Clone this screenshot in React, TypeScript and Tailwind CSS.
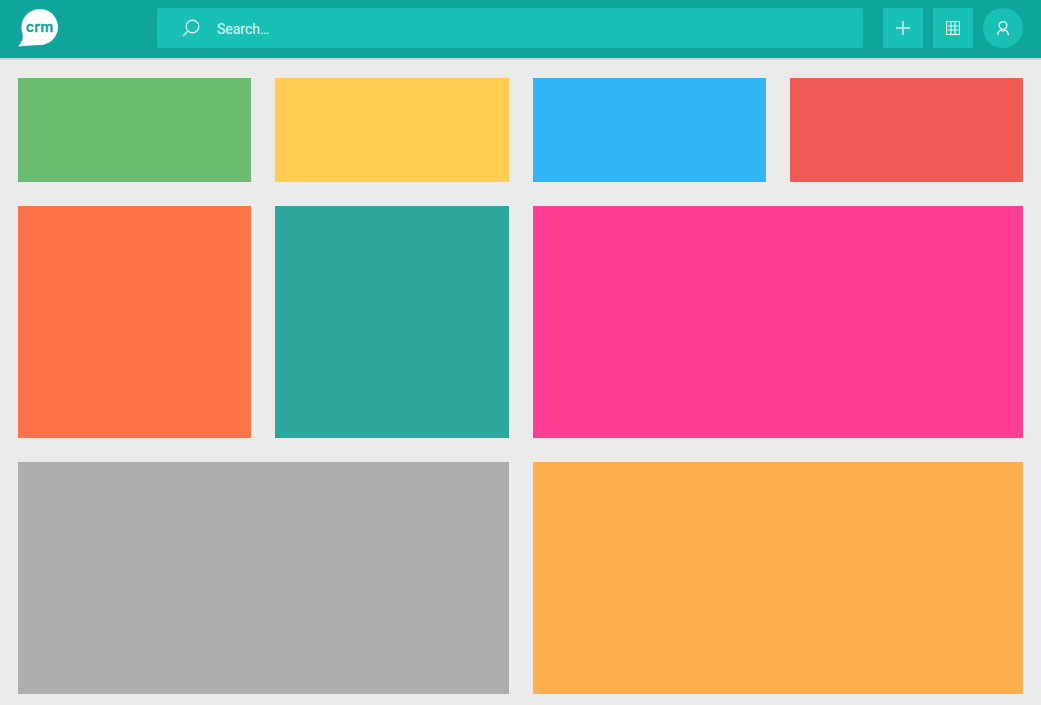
export default function App() {
  return (
    <div className="h-[705px] overflow-hidden bg-[#ebebeb] font-['Roboto',sans-serif]">
      <header className="h-[60px] flex items-start pt-2 bg-[#10a59a] border-b-2 border-[#d2d4d3]">
        <div className="w-[157px] pl-[18px] shrink-0 flex">
          <svg width="41" height="39" viewBox="0 0 41 39">
            <path d="M22 1 C32 1 40 9 40 19 C40 29 32 37 22 37 C16 37 9 38 0 38.500 C3 35 5 32 4.800 27 C4 24.500 3.500 22 3.500 19 C3.500 9 12 1 22 1 Z" fill="#ffffff" />
            <text x="21.500" y="23.500" textAnchor="middle" fontFamily="Inter, sans-serif" fontSize="14.500" fontWeight="600" fill="#10a59a" stroke="#10a59a" strokeWidth="0.300">crm</text>
          </svg>
        </div>
        <div className="flex-1 h-10 bg-[#19c1b4] rounded-[2px] flex items-center pl-[25px]">
          <svg width="18" height="18" viewBox="0 0 18 18" fill="none" stroke="#e4f7f5" strokeWidth="1.200">
            <circle cx="10.500" cy="7.500" r="6.300" />
            <path d="M6 12 L1 17" />
          </svg>
          <span className="ml-[17px] text-[14px] leading-none text-[#e4f7f5] pt-[2px]">Search…</span>
        </div>
        <div className="flex items-center gap-[10px] ml-5 mr-[18px]">
          <button className="w-10 h-10 bg-[#19c1b4] flex items-center justify-center">
            <svg width="14" height="14" viewBox="0 0 14 14" stroke="#c4efeb" strokeWidth="1.500">
              <path d="M7 0 V14 M0 7 H14" />
            </svg>
          </button>
          <button className="w-10 h-10 bg-[#19c1b4] flex items-center justify-center">
            <svg width="14" height="14" viewBox="0 0 14 14" fill="none" stroke="#ffffff" strokeWidth="1">
              <path d="M.5 .5 H13.500 V13.500 H.5 Z" />
              <path d="M5 .5 V13.500 M9 .5 V13.500 M.5 5 H13.500 M.5 9 H13.500" opacity="0.800" strokeWidth="1.200" />
            </svg>
          </button>
          <button className="w-10 h-10 rounded-full bg-[#19c1b4] flex items-center justify-center">
            <svg width="12" height="14" viewBox="0 0 12 14" fill="none" stroke="#ffffff" strokeWidth="1.200">
              <circle cx="6" cy="4.500" r="3.900" />
              <path d="M.6 14 C.6 11 2 10 3.500 9.200 C5 10 7 10 8.500 9.200 C10 10 11.400 11 11.400 14" />
            </svg>
          </button>
        </div>
      </header>
      <main className="grid grid-cols-4 grid-rows-[104px_232px_232px] gap-6 pt-[18px] px-[18px]">
        <div className="bg-[#6abb6f]" />
        <div className="bg-[#ffce50]" />
        <div className="bg-[#30b6f6]" />
        <div className="bg-[#f15a55]" />
        <div className="bg-[#ff7249]" />
        <div className="bg-[#2ca79c]" />
        <div className="col-span-2 bg-[#ff3d92]" />
        <div className="col-span-2 bg-[#adadad]" />
        <div className="col-span-2 bg-[#ffb04e]" />
      </main>
    </div>
  );
}
